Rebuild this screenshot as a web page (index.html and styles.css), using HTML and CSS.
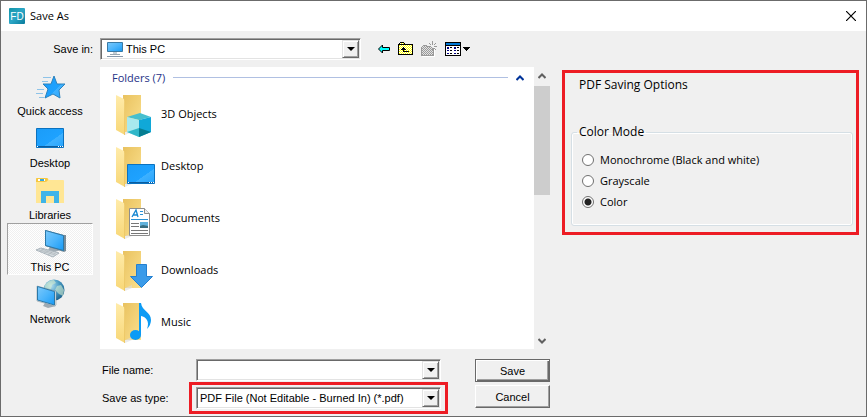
FILE: index.html
```
<!DOCTYPE html>
<html lang="en">
<head>
  <meta charset="UTF-8">
  <meta name="viewport" content="width=device-width, initial-scale=1.0">
  <title>Save As</title>
  <link rel="stylesheet" href="styles.css">
</head>
<body>
  <svg width="0" height="0" class="defs" aria-hidden="true">
    <defs>
      <linearGradient id="blue" x1="0" y1="0" x2="1" y2="1">
        <stop offset="0" stop-color="#1b9cf8"/>
        <stop offset="0.6" stop-color="#1ea2ff"/>
        <stop offset="0.61" stop-color="#3eb1ff"/>
        <stop offset="1" stop-color="#27a4fd"/>
      </linearGradient>
      <linearGradient id="screen" x1="0" y1="0" x2="1" y2="1">
        <stop offset="0" stop-color="#7cc9fa"/>
        <stop offset="0.5" stop-color="#4db5fb"/>
        <stop offset="1" stop-color="#189af5"/>
      </linearGradient>
      <linearGradient id="back" x1="0" y1="0" x2="1" y2="1">
        <stop offset="0" stop-color="#e9c25f"/>
        <stop offset="1" stop-color="#fbe08e"/>
      </linearGradient>
      <linearGradient id="flap" x1="0" y1="0" x2="0" y2="1">
        <stop offset="0" stop-color="#ffebaa"/>
        <stop offset="1" stop-color="#f8d777"/>
      </linearGradient>
      <linearGradient id="logo" x1="0" y1="0" x2="1" y2="1">
        <stop offset="0" stop-color="#1295a8"/>
        <stop offset="0.5" stop-color="#2ba6c6"/>
        <stop offset="1" stop-color="#087b9b"/>
      </linearGradient>
      <radialGradient id="globe" cx="0.35" cy="0.3" r="0.8">
        <stop offset="0" stop-color="#b4dff0"/>
        <stop offset="0.5" stop-color="#4b9cc4"/>
        <stop offset="1" stop-color="#155a86"/>
      </radialGradient>
      <pattern id="dither" width="2" height="2" patternUnits="userSpaceOnUse">
        <rect width="2" height="2" fill="#fff"/>
        <path d="M0 0h1v1h-1zM1 1h1v1h-1z" fill="#ff0"/>
      </pattern>
      <pattern id="dither-gray" width="2" height="2" patternUnits="userSpaceOnUse">
        <rect width="2" height="2" fill="#e2e2e2"/>
        <path d="M0 0h1v1h-1zM1 1h1v1h-1z" fill="#999"/>
      </pattern>
      <symbol id="folder" viewBox="0 0 48 48">
        <path d="M11 5H29V42H11z" fill="url(#back)"/>
        <path d="M11 43l2 2 7-3v-3z" fill="#ddd" opacity="0.6"/>
        <path d="M4 5l8 4 1 2V45L4 40z" fill="url(#flap)"/>
        <path d="M12.500 9.500V45" stroke="#e6bd58" stroke-width="0.600"/>
      </symbol>
    </defs>
  </svg>

  <div class="dialog">
    <header class="title-bar">
      <svg class="logo" width="16" height="16" viewBox="0 0 16 16">
        <rect width="16" height="16" rx="1" fill="url(#logo)"/>
        <text x="8" y="12" text-anchor="middle">FD</text>
      </svg>
      <h1>Save As</h1>
      <button type="button" class="close" aria-label="Close">
        <svg width="10" height="10" viewBox="0 0 10 10"><path d="M0 0l10 10M10 0L0 10" stroke="#000" stroke-width="1.200"/></svg>
      </button>
    </header>

    <form class="content">
      <div class="browser">
        <div class="toolbar">
          <label for="save-in">Save in:</label>
          <div class="combo look-in">
            <svg width="18" height="18" viewBox="0 0 18 18">
              <path d="M1.500 2.500h15v9h-15z" fill="url(#screen)" stroke="#3a7aa5"/>
              <path d="M7 12h4v2h-4z" fill="#c3cdd4"/>
              <path d="M4 14.500h10" stroke="#9aa6af"/>
              <path d="M1 16.500h16" stroke="#8798ab"/>
            </svg>
            <select id="save-in" name="save-in"><option>This PC</option></select>
            <span class="arrow"></span>
          </div>
          <div class="tools">
            <button type="button" aria-label="Back">
              <svg width="12" height="10" viewBox="0 0 12 10"><path d="M0.500 5L4.500 1v2.500h7v3h-7v2.500z" fill="#0ff" stroke="#000"/></svg>
            </button>
            <button type="button" aria-label="Up one level">
              <svg width="15" height="14" viewBox="0 0 15 14" shape-rendering="crispEdges">
                <path d="M1 3V1h1V0h4v1h1v1h7v11H0V3z" fill="url(#dither)"/>
                <path d="M2 0h4v1H2zM1 1h1v1H1zM6 1h1v1H6zM0 2h15v1H0zM0 3h1v10H0zM14 3h1v10h-1zM0 12h15v1H0z" fill="#000"/>
                <path d="M5 5h1v5H5zM4 6h3v1H4zM3 7h5v1H3zM5 9h6v1H5z" fill="#000"/>
              </svg>
            </button>
            <button type="button" aria-label="New folder" disabled>
              <svg width="16" height="16" viewBox="0 0 16 16" shape-rendering="crispEdges">
                <path d="M1 15h12V6h1v10H1z" fill="#fff"/>
                <path d="M0 6h1V5h1V4h4v1h1v1h5v9H0z" fill="url(#dither-gray)"/>
                <path d="M0 6h1v9H0zM1 5h1v1H1zM2 4h4v1H2zM6 5h1v1H6zM1 14h12v1H1zM12 7h1v7h-1zM11 0h1v4h-1zM8 2h1v1H8zM9 3h1v1H9zM14 2h1v1h-1zM13 3h1v1h-1zM13 5h3v1h-3zM7 5h3v1H7zM13 7h1v1h-1zM14 8h1v1h-1zM11 7h1v3h-1z" fill="#999"/>
              </svg>
            </button>
            <button type="button" class="views" aria-label="View menu">
              <svg width="16" height="14" viewBox="0 0 16 14" shape-rendering="crispEdges">
                <path d="M0 0h16v14H0z" fill="#000"/>
                <path d="M1 4h14v9H1z" fill="#fff"/>
                <path d="M1 1h14v2H1z" fill="#0078d7"/>
                <path d="M2 5h2v2H2zM2 8h2v1H2zM2 11h2v1H2zM9 5h2v2H9zM9 8h2v1H9zM9 11h2v1H9z" fill="#000080"/>
                <path d="M5 5h2v1H5zM5 8h2v1H5zM5 11h2v1H5zM12 5h2v1h-2zM12 8h2v1h-2zM12 11h2v1h-2z" fill="#000"/>
              </svg>
              <svg width="7" height="4" viewBox="0 0 7 4" shape-rendering="crispEdges"><path d="M0 0h7v1H0zM1 1h5v1H1zM2 2h3v1H2zM3 3h1v1H3z"/></svg>
            </button>
          </div>
        </div>

        <div class="middle">
          <nav class="places">
            <button type="button">
              <svg width="32" height="32" viewBox="0 0 32 32">
                <path d="M9 6.500h8M8 10.500h6M3 18.500h7M2 22.500h7M5 26.500h5" stroke="#8ec3e8"/>
                <path d="M20 5l3 8 8 0-6 6 1 8-7-4-8 4 3-9-5-5 8 0z" fill="url(#blue)" stroke="#2b82bd"/>
              </svg>
              Quick access
            </button>
            <button type="button">
              <svg width="32" height="32" viewBox="0 0 32 32">
                <path d="M2.500 5.500h27v19h-27z" fill="url(#blue)" stroke="#0b72bf"/>
                <path d="M3 23.500h26" stroke="#0b5c9e"/>
                <path d="M3 23.500h1M24 23.500h1M26 23.500h1M28 23.500h1" stroke="#fff"/>
              </svg>
              Desktop
            </button>
            <button type="button">
              <svg width="32" height="32" viewBox="0 0 32 32">
                <path d="M2 4q0-1 1-1h10q1 0 2 2h14q1 0 1 1v22h-28z" fill="#ffe694"/>
                <path d="M2 7V4q0-1 1-1h10q1 0 1 2-1 2-3 2z" fill="#f6c841"/>
                <path d="M4 4h7v2h-7z" fill="#fff"/><path d="M6 4h4v2h-4z" fill="#36a9e1"/>
                <path d="M7 16h18v12h-5v-7h-8v7h-5z" fill="#3eb4e8"/>
              </svg>
              Libraries
            </button>
            <button type="button" class="selected">
              <svg width="32" height="32" viewBox="0 0 32 32">
                <path d="M16 20l4-1 1 3 5 1-5 2-7-2z" fill="#9eaab3"/>
                <path d="M11 3l19 5 2 0V24l-2 1-19-6z" fill="#788b97"/>
                <path d="M11.500 3.500l18 5V23.500l-18-5z" fill="url(#screen)" stroke="#2b78a8"/>
                <path d="M2 23l5-2 18 5-6 4z" fill="#d4dbdf" stroke="#aab4bb"/>
                <path d="M5 23l16 5M7 22l15 5M10 22l-4 3M14 24l-4 2M18 25l-4 3" stroke="#a7b0b6" stroke-width="0.600"/>
              </svg>
              This PC
            </button>
            <button type="button">
              <svg width="32" height="32" viewBox="0 0 32 32">
                <circle cx="20" cy="11" r="10.500" fill="url(#globe)"/>
                <path d="M11 6q4-5 9-5l2 3-4 2-1 4-4 1-3-1zM23 7l4-1 3 5-1 6-4-2-4-4z" fill="#d6edcf" opacity="0.600"/>
                <path d="M11 24l5-1 1 3 5 1-8 2-5-2z" fill="#9eaab3"/>
                <path d="M3 7l18 5 1 0V26l-1 1-18-5z" fill="#dce4e8" stroke="#7c8c96" stroke-width="0.500"/>
                <path d="M3.500 7.500l17 5V26l-17-5z" fill="url(#screen)" stroke="#2b78a8"/>
              </svg>
              Network
            </button>
          </nav>

          <div class="file-view">
            <div class="files">
              <div class="group-header">
                <h2>Folders (7)</h2>
                <hr>
                <svg width="8" height="6" viewBox="0 0 8 6"><path d="M0.500 5L4 1.500 7.500 5" fill="none" stroke="#039" stroke-width="2"/></svg>
              </div>
              <ul>
                <li>
                  <svg width="48" height="48" viewBox="0 0 48 48">
                    <use href="#folder"/>
                    <path d="M15 27l13-4 11 4-12 3z" fill="#47bfce"/>
                    <path d="M15 27l12 3v17l-12-5z" fill="#a8e9ee"/>
                    <path d="M27 30l12-3v15l-12 5z" fill="#10a8d8"/>
                    <path d="M15 42l12-4v9z" fill="#30b7c9"/>
                    <path d="M27 38l12 4-12 5z" fill="#067d91"/>
                  </svg>
                  3D Objects
                </li>
                <li>
                  <svg width="48" height="48" viewBox="0 0 48 48">
                    <use href="#folder"/>
                    <path d="M15.500 22.500h27v19h-27z" fill="url(#blue)" stroke="#0b72bf"/>
                    <path d="M16 40.500h26" stroke="#0b5c9e"/>
                    <path d="M16 40.500h1M37 40.500h1M39 40.500h1M41 40.500h1" stroke="#fff"/>
                  </svg>
                  Desktop
                </li>
                <li>
                  <svg width="48" height="48" viewBox="0 0 48 48">
                    <use href="#folder"/>
                    <path d="M17.500 14.500h15l5 5v22h-20z" fill="#fff" stroke="#8d8d8d"/>
                    <path d="M32.500 14.500v5h5" fill="#eee" stroke="#8d8d8d"/>
                    <path d="M20 23l4-7 2 7M21 21h4" fill="none" stroke="#1787d1" stroke-width="1.300"/>
                    <path d="M28 17.500h3M28 20.500h3M19 25.500h17" stroke="#2a91d5"/>
                    <path d="M19 29.500h8M19 32.500h8M19 36.500h17M19 39.500h17" stroke="#777"/>
                    <path d="M28 28h8v6h-8z" fill="#61b2dc"/><path d="M28 32l3-1 5 1v2h-8z" fill="#386d80"/>
                  </svg>
                  Documents
                </li>
                <li>
                  <svg width="48" height="48" viewBox="0 0 48 48">
                    <use href="#folder"/>
                    <path d="M24.500 18.500h10v12h6l-11 11-11-11h6z" fill="#3a9be9" stroke="#2480d0"/>
                  </svg>
                  Downloads
                </li>
                <li>
                  <svg width="48" height="48" viewBox="0 0 48 48">
                    <use href="#folder"/>
                    <path d="M27 5h2c1 8 10 9 10 17q0 5-4 9c3-8-1-12-6-13v19h-2z" fill="#0c9bf5"/>
                    <ellipse cx="23.500" cy="37" rx="5.500" ry="5" fill="#0c9bf5"/>
                  </svg>
                  Music
                </li>
              </ul>
            </div>
            <div class="scrollbar">
              <svg width="8" height="6" viewBox="0 0 8 6"><path d="M0.500 5L4 1.500 7.500 5" fill="none" stroke="#606060" stroke-width="2"/></svg>
              <div class="thumb"></div>
              <svg width="8" height="6" viewBox="0 0 8 6"><path d="M0.500 1L4 4.500 7.500 1" fill="none" stroke="#606060" stroke-width="2"/></svg>
            </div>
          </div>
        </div>

        <div class="footer">
          <div class="fields">
            <div class="field">
              <label for="file-name">File name:</label>
              <div class="combo">
                <input type="text" id="file-name" name="file-name" autocomplete="off">
                <span class="arrow"></span>
              </div>
            </div>
            <div class="field">
              <label for="file-type">Save as type:</label>
              <div class="highlight">
                <div class="combo">
                  <select id="file-type" name="file-type"><option>PDF File (Not Editable - Burned In) (*.pdf)</option></select>
                  <span class="arrow"></span>
                </div>
              </div>
            </div>
          </div>
          <div class="actions">
            <button type="submit" class="push default">Save</button>
            <button type="button" class="push">Cancel</button>
          </div>
        </div>
      </div>

      <section class="options">
        <h2>PDF Saving Options</h2>
        <fieldset>
          <legend>Color Mode</legend>
          <label><input type="radio" name="color-mode" value="mono">Monochrome (Black and white)</label>
          <label><input type="radio" name="color-mode" value="gray">Grayscale</label>
          <label><input type="radio" name="color-mode" value="color" checked>Color</label>
        </fieldset>
      </section>
    </form>
  </div>
</body>
</html>
```

FILE: styles.css
```
* {
  box-sizing: border-box;
}

body {
  margin: 0;
  font-family: "Liberation Sans", Arial, sans-serif;
  font-size: 11px;
  line-height: 16px;
  color: #000;
}

h1, h2, ul {
  margin: 0;
  padding: 0;
  font-size: 11px;
  font-weight: normal;
}

svg {
  display: block;
  flex: none;
}

.defs {
  position: absolute;
}

button, input, select {
  font: inherit;
  color: inherit;
}

.dialog {
  display: flex;
  flex-direction: column;
  height: 100vh;
  background: #f0f0f0;
  border: 1px solid #6b6b6b;
}

/* Title bar */
.title-bar {
  display: flex;
  align-items: center;
  height: 30px;
  padding: 0 10px 0 8px;
  gap: 5px;
  background: #fff;
}

.title-bar h1 {
  flex: 1;
  font-family: "Open Sans", sans-serif;
}

.logo text {
  font-family: "Liberation Sans", Arial, sans-serif;
  font-size: 10px;
  fill: #fff;
}

.close {
  padding: 0;
  border: none;
  background: none;
}

.content {
  display: flex;
  flex: 1;
  min-height: 0;
  gap: 12px;
  padding: 0 7px 0 6px;
}

.browser {
  display: flex;
  flex: 1;
  flex-direction: column;
  min-width: 0;
}

/* Toolbar */
.toolbar {
  display: flex;
  align-items: center;
  height: 36px;
  flex: none;
}

.toolbar label {
  width: 86px;
  margin-right: 7px;
  text-align: right;
}

.combo {
  display: flex;
  height: 22px;
  background: #fff;
  border: 1px solid;
  border-color: #a0a0a0 #fff #fff #a0a0a0;
  box-shadow: inset 1px 1px #696969, inset -1px -1px #e3e3e3;
  padding: 1px;
}

.look-in {
  flex: 0 1 261px;
}

.look-in > svg {
  margin-left: 4px;
}

.combo select,
.combo input {
  flex: 1;
  min-width: 0;
  padding: 0 2px;
  border: none;
  outline: none;
  appearance: none;
  background: none;
}

.arrow {
  display: flex;
  align-items: center;
  justify-content: center;
  width: 17px;
  background: #f0f0f0;
  border: 1px solid;
  border-color: #e3e3e3 #696969 #696969 #e3e3e3;
  box-shadow: inset 1px 1px #fff, inset -1px -1px #a0a0a0;
}

.arrow::before {
  content: "";
  border: 4px solid transparent;
  border-top-color: #000;
  border-bottom: none;
}

.tools {
  display: flex;
  align-items: center;
  gap: 8px;
  padding-left: 17px;
}

.tools button {
  display: flex;
  align-items: center;
  gap: 2px;
  padding: 0;
  border: none;
  background: none;
}

/* Places and file list */
.middle {
  display: flex;
  flex: 1;
  gap: 7px;
  min-height: 0;
}

.places {
  width: 86px;
  flex: none;
}

.places button {
  display: flex;
  flex-direction: column;
  align-items: center;
  width: 100%;
  height: 52px;
  padding: 3px 0 0;
  border: 1px solid transparent;
  background: none;
}

.places .selected {
  border-color: #a0a0a0 #fff #fff #a0a0a0;
  background: repeating-conic-gradient(#fff 0 25%, #f0f0f0 0 50%) 0 0 / 2px 2px;
}

.file-view {
  display: flex;
  flex: 1;
  min-width: 0;
  font-family: "Open Sans", sans-serif;
}

.files {
  flex: 1;
  overflow: hidden;
  background: #fff;
}

.group-header {
  display: flex;
  align-items: center;
  gap: 8px;
  height: 21px;
  padding: 0 10px 0 12px;
  color: #1e3287;
}

.group-header hr {
  flex: 1;
  margin: 0;
  border: none;
  border-top: 1px solid #b0c0e2;
}

.files li {
  display: flex;
  align-items: center;
  gap: 1px;
  height: 52px;
  padding-left: 12px;
}

.scrollbar {
  display: flex;
  flex-direction: column;
  align-items: center;
  width: 16px;
  padding: 6px 0 5px;
}

.thumb {
  width: 100%;
  height: 109px;
  margin-top: 7px;
  margin-bottom: auto;
  background: #cdcdcd;
}

/* File name and type */
.footer {
  display: flex;
  flex: none;
  gap: 27px;
  padding: 10px 0 2px 95px;
}

.fields {
  flex: 1;
  min-width: 0;
}

.field {
  display: flex;
  align-items: center;
}

.field label {
  width: 94px;
  flex: none;
}

.field .combo {
  flex: 1;
  margin-right: 7px;
}

.highlight {
  flex: 1;
  min-width: 0;
  margin: 1px 0 0 -7px;
  padding: 2px 4px;
  border: 3px solid #ed1c24;
}

.highlight .combo {
  margin: 0;
}

.actions {
  display: flex;
  flex: none;
  flex-direction: column;
  gap: 3px;
  width: 75px;
}

.push {
  height: 23px;
  padding: 0;
  background: #f0f0f0;
  border: 1px solid;
  border-color: #fff #696969 #696969 #fff;
  box-shadow: inset -1px -1px #a0a0a0;
}

.default {
  border-color: #696969;
  box-shadow: inset 1px 1px #fff, inset -1px -1px #696969, inset -2px -2px #a0a0a0;
}

/* PDF options */
.options {
  flex: 0 0 297px;
  align-self: flex-start;
  margin-top: 39px;
  padding: 4px 3px 6px 6px;
  border: 3px solid #ed1c24;
  font-family: "Open Sans", sans-serif;
}

.options h2 {
  padding-left: 8px;
  font-size: 12px;
}

fieldset {
  margin: 31px 0 0;
  padding: 9px 10px 13px;
  border: 1px solid #d5dfe5;
  border-radius: 3px;
  box-shadow: inset 0 0 0 1px #fff;
}

legend {
  margin-left: -5px;
  padding: 0 2px;
  font-size: 12px;
}

fieldset label {
  display: flex;
  align-items: center;
  gap: 6px;
  height: 21px;
}

input[type="radio"] {
  appearance: none;
  width: 12px;
  height: 12px;
  margin: 0;
  border: 1px solid #707070;
  border-radius: 50%;
  background: #fff;
}

input[type="radio"]:checked {
  background: radial-gradient(#222 0 3px, #fff 4px);
}
```
